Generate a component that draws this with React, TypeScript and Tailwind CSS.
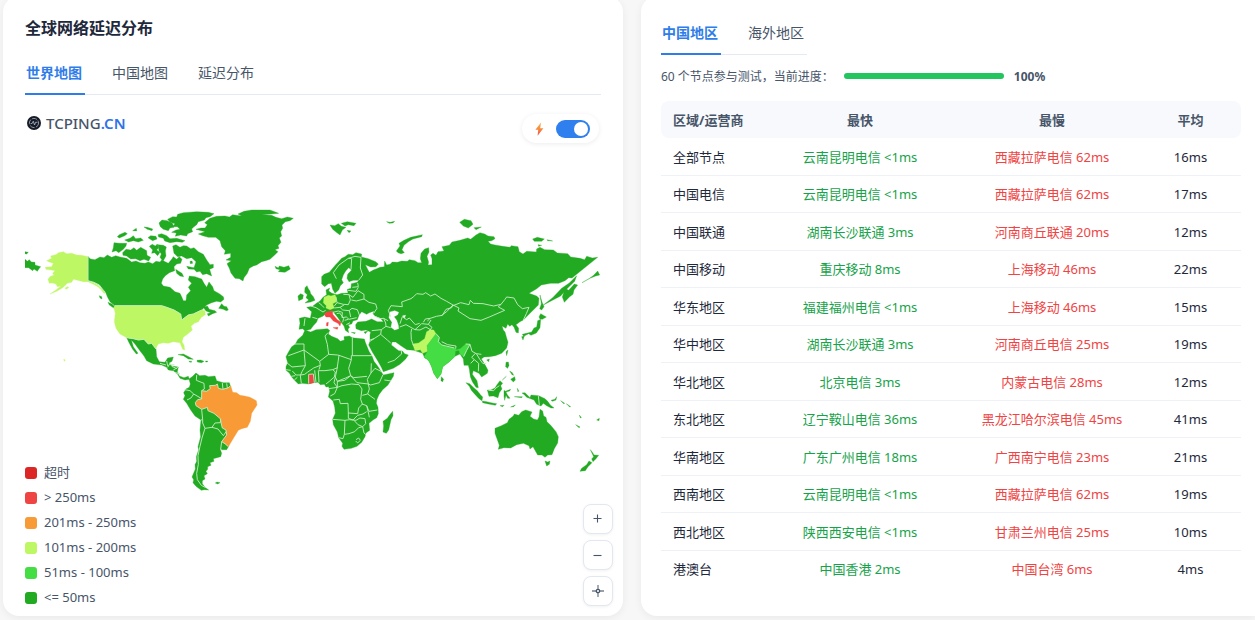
import { useState } from "react";

const GREEN = "#22aa22";
const LIME = "#bef764";
const LIGHT = "#44dd44";
const ORANGE = "#f89a36";
const RED = "#f54242";

type Area = { fill: string; points: string };
type Region = { x: number; y: number; areas: Area[]; borders?: string };

const land = (...shapes: string[]): Area[] => shapes.map((points) => ({ fill: GREEN, points }));

const regions: Region[] = [
  {
    // North and Central America
    x: 20,
    y: 200,
    areas: [
      ...land(
        "15,178 22,184 28,179 34,186 45,187 45,195 62,200 57,206 52,214 42,207 38,212 26,203 15,203",
        "15,155 25,157 20,162 15,161",
        "204,170 212,177 225,179 240,171 252,173 262,165 275,172 287,167 300,171 320,175 335,186 348,183 360,188 375,190 385,186 398,191 408,184 420,186 425,180 445,190 455,178 460,170 470,178 478,170 486,178 482,190 470,192 462,200 464,212 448,218 436,227 428,237 424,250 430,258 450,262 465,275 480,280 485,290 490,302 498,302 500,285 512,272 505,262 515,250 505,240 508,228 525,230 545,237 552,250 560,262 567,246 578,260 582,272 598,281 610,290 612,298 602,306 590,304 575,308 560,315 545,330 520,342 505,345 485,360 482,342 462,330 440,322 425,317 285,317 270,305 262,290 258,280 248,268 238,255 222,247 204,242",
        "550,322 562,318 568,328 585,332 590,337 578,341 565,348 562,341 572,338 558,333",
        "596,325 605,311 612,319 620,320 625,330 619,332 610,328",
        "238,287 245,290 246,297 240,294",
        "264,307 276,312 288,323 292,329 280,323 268,315",
        "458,138 468,134 480,142 490,137 500,138 512,146 522,143 535,155 550,163 560,180 570,194 580,193 580,203 569,208 575,228 560,221 548,224 540,214 530,216 522,208 505,207 500,199 522,203 528,185 515,173 500,176 485,168 473,170 462,160",
        "467,208 475,213 486,220 491,230 480,228 470,220",
        "510,184 516,183 518,190 511,191",
        "282,128 298,130 320,130 318,138 310,148 296,158 288,152 276,156 280,143",
        "308,158 318,148 332,150 342,143 350,151 362,142 380,152 381,166 392,172 386,183 372,178 360,182 347,176 332,177 320,168 309,166",
        "292,110 298,104 315,97 322,101 314,107 298,114",
        "314,120 330,115 340,107 347,116 362,114 370,121 355,126 340,122 326,126",
        "338,92 349,85 350,93",
        "372,81 382,82 398,87 396,92 382,88",
        "384,113 392,107 408,109 411,117 398,122",
        "388,139 397,133 406,138 412,132 416,143 410,150 420,157 413,167 404,158 395,160 398,150",
        "414,134 430,136 439,141 436,153 438,168 429,184 420,172 424,162 417,153",
        "414,104 425,101 440,107 450,116 470,115 495,122 487,127 470,125 450,128 434,123 430,115 416,111",
        "443,58 458,50 470,51 473,43 490,38 530,35 565,37 582,41 570,50 558,53 553,60 535,65 530,74 522,80 515,87 518,95 503,101 500,108 482,105 466,109 469,99 455,97 468,90 480,88 472,80 457,80 465,71 450,67",
        "417,69 426,60 442,62 457,70 462,82 450,84 445,92 430,88 421,80",
        "320,413 340,416 355,420 372,418 385,432 395,430 408,447 410,470 418,485 435,487 443,474 460,471 456,484 447,489 455,498 475,501 472,515 478,528 492,533 505,529 508,538 495,540 480,535 473,523 460,512 445,510 440,502 425,495 400,492 380,482 372,468 358,450 345,432 334,420 340,440 354,460 349,462 338,448 328,430",
        "474,464 490,462 506,470 520,478 505,477 490,467",
        "531,481 542,480 552,484 545,488 532,486",
        "507,484 515,484 514,487 508,486",
        "557,483 563,483 562,486 557,486",
      ),
      { fill: LIME, points: "80,182 95,175 92,168 108,164 115,158 130,155 140,161 155,160 170,165 184,166 204,170 204,242 221,249 236,257 246,269 255,277 253,281 242,268 234,260 220,253 204,245 190,245 170,240 160,238 155,247 142,250 128,263 110,274 90,282 108,270 123,258 112,260 108,252 98,249 88,250 84,238 90,230 102,225 98,220 105,212 95,210 78,208 76,202 95,200 100,190 88,186" },
      { fill: LIME, points: "135,264 144,260 146,263 138,268" },
      { fill: LIME, points: "285,317 425,317 440,322 462,330 482,342 485,360 505,345 520,342 545,330 555,332 556,344 544,352 535,365 523,370 513,379 517,390 503,402 490,412 486,425 492,435 494,450 488,448 480,428 460,425 445,430 430,428 415,432 410,440 408,447 395,430 385,432 372,418 355,420 340,416 320,413 300,402 288,385 283,365 286,340 281,322" },
      { fill: LIME, points: "131,478 136,480 133,484" },
    ],
    borders: "M204 170V242L222 247L238 255L248 268L256 277M285 317H425L440 322L462 330L482 342L485 360L505 345L520 342L545 330M320 413L340 416L355 420L372 418L385 432L395 430L408 447M443 502L450 490M460 510L474 502M472 521H480",
  },
  {
    // Greenland and Iceland
    x: 170,
    y: 200,
    areas: land(
      "78,88 93,84 105,84 112,74 104,68 120,55 140,49 165,48 178,51 188,44 215,48 204,42 222,34 245,30 300,30 326,40 305,42 275,44 305,46 318,52 335,56 352,51 370,55 360,62 346,65 336,75 338,85 332,95 335,108 328,114 333,127 324,137 327,145 315,149 324,155 314,165 300,178 287,182 275,185 260,195 250,198 238,205 232,220 222,233 219,243 208,236 195,235 183,219 178,205 171,191 184,182 168,180 182,172 182,160 163,163 166,152 155,140 150,122 137,112 115,112 98,107 85,102 105,95",
      "315,199 325,204 328,198 342,202 356,197 361,207 345,217 325,215 330,209 318,206",
    ),
  },
  {
    // Europe and Asia
    x: 280,
    y: 210,
    areas: [
      ...land(
        "125,200 132,193 148,187 158,175 167,164 175,156 185,145 195,140 205,133 218,134 228,128 245,132 244,141 265,146 287,155 295,162 288,170 272,171 256,164 263,178 268,187 280,180 290,176 300,172 313,170 314,153 320,165 330,163 337,156 352,157 365,153 382,154 388,149 405,152 414,158 425,158 421,146 423,130 434,117 446,113 447,126 441,139 446,157 444,165 456,164 456,146 452,135 459,130 468,136 474,125 492,123 486,110 508,106 516,96 540,91 563,84 572,88 588,75 600,68 614,72 624,78 642,80 645,86 635,92 624,94 632,102 645,105 668,109 690,112 694,107 714,110 718,125 729,132 740,124 769,126 770,117 780,112 794,119 820,120 832,129 863,131 872,141 900,145 914,149 920,139 937,144 953,142 876,204 866,203 855,212 836,220 812,220 784,225 769,237 747,250 770,258 777,265 775,285 750,310 730,330 720,335 708,344 716,355 715,369 708,367 702,352 696,344 689,349 683,342 678,355 666,348 670,360 675,366 680,384 684,397 680,414 665,430 646,437 628,440 612,441 604,447 616,466 624,481 622,490 605,501 597,490 580,482 577,493 591,512 595,533 588,532 577,515 571,500 568,478 565,466 552,466 550,447 540,432 525,439 508,455 488,470 483,492 472,506 461,489 455,470 448,455 442,448 434,444 428,430 401,421 381,419 365,409 347,396 336,396 334,405 356,422 367,423 374,431 385,435 377,447 360,463 340,475 310,485 304,472 293,452 277,426 266,405 270,394 270,375 272,366 258,360 244,362 228,356 227,344 233,336 258,334 275,327 292,335 310,335 301,324 285,318 279,311 283,303 268,308 260,313 245,305 237,316 232,329 219,333 215,342 204,344 209,352 204,357 206,368 196,361 192,348 183,337 174,323 165,312 158,303 137,309 130,318 114,325 110,336 101,346 92,358 75,362 68,356 57,358 60,340 58,325 74,321 91,325 95,305 80,292 98,289 109,280 120,273 129,262 140,254 138,240 149,234 146,243 156,250 171,254 185,250 204,249 202,238 213,235 214,221 232,217 236,211 220,211 207,215 201,205 203,193 215,180 206,173 197,183 190,195 185,209 190,218 181,227 176,240 165,250 158,238 154,220 145,221 134,230 125,222",
        "75,233 81,227 85,236 90,243 92,251 100,260 105,271 92,276 75,279 86,270 78,263 82,254 74,247",
        "54,258 62,251 70,255 68,267 56,272",
        "150,45 164,47 175,41 184,49 198,52 187,60 180,75 169,67 158,58",
        "184,40 202,35 228,40 222,47 205,44 195,48",
        "201,61 213,63 207,68",
        "320,35 331,37 344,34 339,39 328,40",
        "349,123 360,108 357,100 372,91 392,82 427,74 425,80 399,87 385,95 372,106 366,119 373,128 363,131 354,128",
        "539,37 553,28 573,32 579,43 565,54 550,48",
        "582,53 604,51 588,59",
        "758,87 772,82 793,87 785,94 763,94",
        "801,89 818,93 803,92",
        "774,104 785,106 776,109",
        "790,285 818,263 845,235 868,219 890,197 884,214 861,236 842,258",
        "855,235 866,241 883,222 893,225 882,240 879,253 869,260 853,277 847,261",
        "906,218 927,206 941,196 953,183 959,195 947,198 930,205 910,216",
        "780,255 786,276 792,290 785,300 779,296 784,282",
        "777,321 782,311 799,321 787,328 780,327",
        "773,332 782,328 780,353 769,369 753,376 746,371 731,379 727,373 755,366 762,354 770,351",
        "725,380 733,378 729,390",
        "678,425 684,420 680,437",
        "214,367 226,368 224,371",
        "252,366 263,363 256,371",
      ),
      { fill: LIME, points: "132,262 145,256 153,258 165,254 169,263 168,276 158,281 163,294 150,299 138,294 139,287 130,278" },
      { fill: RED, points: "132,312 143,305 158,303 158,313 172,329 183,337 180,348 174,340 160,333 150,321 138,321" },
      { fill: RED, points: "159,353 174,352 172,358" },
      { fill: RED, points: "140,338 145,337 144,348 139,347" },
      { fill: "#fff", points: "330,306 344,302 356,307 353,314 342,320 350,331 355,346 356,356 344,360 333,352 336,337 327,323" },
      { fill: "#fff", points: "368,317 377,316 373,325" },
      { fill: LIME, points: "398,402 416,399 434,386 440,365 451,359 461,360 468,371 454,390 441,407 443,424 428,430 421,419 405,422" },
      { fill: LIGHT, points: "468,371 478,382 475,395 485,405 501,410 523,414 529,419 541,416 557,402 570,403 560,421 551,440 540,432 537,421 526,423 525,439 508,455 488,470 483,492 472,506 461,489 455,470 448,455 442,448 432,441 443,424 441,407 454,390" },
    ],
    borders: "M169 206L160 188L177 165L205 145L215 146L213 178M205 145L225 139L243 142L241 174L248 195L236 211M217 232L235 230L233 219M204 241L228 244L235 232M168 262L171 278L190 283L205 284L211 270L207 254L190 253M207 254L219 262L234 242L252 253L252 267L229 273L214 270M252 267L267 277L287 282L291 295L281 310M163 294L180 292L188 300L207 302L216 295L232 299L238 315M171 278L163 288M180 292L192 285M97 322L112 326M92 288L108 293L129 306L137 301M116 278L126 286L132 293M159 307L175 303L187 307L186 323L199 321L207 328L230 323M170 311L179 309L191 325L188 337M194 331L205 328M199 344L210 338M208 302L212 321M75 325L72 348M283 318L300 326L311 325L324 332M311 325L317 339L318 349L304 359L275 362M318 349L332 353M304 359L302 373L282 386L270 390M302 373L323 391L332 399M282 386L270 394M332 320L325 301L333 287L367 290L365 276L393 266L401 260L410 251L429 253L437 248L452 258L465 252L483 265L500 274L519 285L515 293L498 298L487 316L469 319L451 325L442 333M360 341L367 320L380 329L388 324L406 344L419 340M359 351L378 344L405 359L425 341L445 343L453 330M395 357L393 367L394 389L401 408M405 359L420 360L438 351L451 359M445 343L456 352L448 363M451 325L436 327L430 337M519 285L537 294L534 303L570 326L603 331L628 321L674 301L655 291L663 283L641 288L609 281L580 280L571 271L567 284L542 278L519 287M663 283L675 268L680 261L702 264L713 284L727 296L747 292L739 311L730 330M519 285L500 305L484 317M468 371L478 382L475 395L485 405L523 414M557 402L570 403L560 421L551 440M570 403L576 424L589 431L604 433M586 430L575 442L583 449L596 460L595 484M589 431L600 449L609 461L619 460M572 460L583 449M323 458L343 451L365 432L364 423M485 395L503 404L528 408L527 416",
  },
  {
    // Africa
    x: 270,
    y: 320,
    areas: [
      ...land(
        "105,30 122,36 138,29 172,26 179,31 175,42 185,49 203,56 211,64 223,60 222,50 238,48 247,53 262,55 283,57 286,67 297,94 306,108 312,124 325,141 334,156 340,165 372,158 370,169 354,195 338,209 327,224 321,238 319,250 324,262 325,281 320,293 309,300 297,310 299,331 288,339 285,350 275,367 261,379 244,385 222,388 216,379 218,370 206,353 202,336 190,314 188,298 196,280 194,261 189,243 175,231 179,214 176,200 168,201 163,193 151,194 144,187 132,188 115,192 97,190 85,192 73,180 65,171 58,159 48,151 48,140 53,128 48,110 56,95 65,80 76,73 83,59 98,46",
        "368,274 369,287 363,299 356,330 349,340 339,336 341,318 339,304 352,295 358,286",
        "514,170 521,178 517,186 513,181",
      ),
      { fill: RED, points: "116,163 130,162 131,188 116,191" },
    ],
    borders: "M75 72H102V90L55 107M102 90L106 137L66 141L50 128M102 90L149 124L176 103L172 73L165 48L174 38M176 103L203 105L207 106L244 119V107H306M247 53V107M244 119L236 145L242 167L227 174L202 184L196 171L201 148L207 106M149 124L151 136L131 144L112 157L104 163L93 165L78 165L67 153M106 137L96 155L91 167L94 190M145 152L147 187M134 151L138 187M116 163V191M116 163L130 162L133 188M145 152L165 152L188 149L196 156L193 171L178 184L168 192M151 136L147 149M188 149L203 143M196 171L192 188L202 202L176 206M202 184L202 202L194 221L181 228M202 184L224 181L242 167L261 188L295 192L292 178L303 159L304 130M242 167L251 173L291 169M303 159L315 145L333 154M339 164L328 188L302 195L295 192L298 207L293 222L315 238M343 180L364 183M202 202L216 197L245 192L267 194L276 207L272 238L277 252L266 264L263 281L235 279L234 250L211 251L208 238L190 240M277 226L293 222M276 252L290 257L297 274L322 270M290 257L296 282L298 292M235 279V295L249 300L263 286L279 282L290 275M188 298L225 301L239 299L258 301L270 294L285 296L287 311L278 320L264 314L252 301M225 301L223 343L219 356L206 353M223 343L237 341L254 335L266 323L278 320L282 339L288 344M258 359L266 354L271 361L263 369L257 363M48 149L62 151M64 169L76 167M73 180L82 172",
  },
  {
    // South-East Asia and Oceania
    x: 430,
    y: 320,
    areas: land(
      "195,325 214,317 232,308 237,298 250,288 253,282 266,286 275,275 287,270 306,276 300,289 311,297 322,300 327,291 330,268 338,273 341,288 348,292 351,305 362,316 378,335 385,350 383,369 373,386 366,404 353,405 345,412 336,405 323,405 315,391 309,380 300,387 297,377 280,370 260,374 242,384 222,383 205,388 208,376 202,359 195,340",
      "345,423 353,426 360,423 358,433 350,438",
      "481,389 488,398 492,405 506,406 498,416 489,425 485,417 491,410",
      "477,423 486,428 474,440 466,452 450,454 455,445 470,434",
      "108,188 119,191 132,204 142,212 152,225 158,231 156,242 147,236 133,221 124,211 118,199",
      "157,243 170,245 183,248 200,251 196,256 175,252 158,248",
      "172,210 183,210 195,204 201,194 210,182 218,190 212,197 216,207 208,218 204,233 190,228 177,229",
      "222,211 226,214 242,208 239,213 228,216 232,224 240,235 233,235 228,226 224,241 222,229",
      "276,219 285,218 292,225 300,233 303,225 326,227 345,236 353,244 361,255 372,264 363,264 350,257 340,250 333,258 320,253 312,240 290,232 283,224",
      "228,127 235,126 237,136 233,145 227,140",
      "239,153 247,158 251,166 246,164",
      "242,178 254,170 256,180 250,186",
      "170,120 178,117 176,125",
      "210,257 222,256 218,260",
      "242,261 256,255 251,260",
      "262,205 266,212 264,216",
      "253,230 277,230 275,233",
      "437,314 450,321 447,323",
      "500,300 508,295 507,302",
      "363,241 375,238 380,230 378,240 368,244",
      "392,242 404,250 401,251",
      "409,251 422,260 419,261",
      "448,285 454,293 451,294",
      "227,171 217,180 229,169",
    ),
    borders: "M175 211L191 212L198 204L208 197M325 227L328 256",
  },
  {
    // South America
    x: 160,
    y: 350,
    areas: [
      ...land(
        "87,87 98,79 108,69 119,77 135,76 146,80 165,78 170,92 190,98 208,98 212,110 214,150 220,230 205,290 200,299 187,299 180,296 185,310 182,320 160,326 162,334 150,338 153,346 143,350 143,358 138,364 142,371 132,377 135,387 127,392 127,401 135,412 146,420 133,419 124,421 108,409 99,398 101,389 96,381 101,369 106,357 105,344 110,334 109,320 116,299 114,290 122,260 120,241 123,210 105,198 92,180 80,160 70,148 75,137 71,128 78,117 88,112 91,102",
        "166,399 171,396 180,398 173,402",
      ),
      { fill: ORANGE, points: "125,122 140,124 151,116 149,107 166,106 172,102 175,115 187,118 204,114 212,107 218,127 230,128 240,136 254,138 270,142 289,152 291,165 275,190 271,214 262,232 245,236 235,241 222,262 205,290 195,281 185,275 200,255 198,240 187,234 184,222 181,206 162,190 144,182 142,172 125,178 108,167 106,158 113,149 125,147" },
    ],
    borders: "M110 75L109 91L132 100L133 117L125 122L125 147M74 119L90 122L101 132L93 144L81 150M101 132L125 146M125 147L113 149L106 158L108 167L125 178L142 172L144 182M125 178L128 209L123 210M144 182L162 190L181 206L184 222L187 234L198 240L200 255L185 275L195 281L205 290M128 209L128 219L135 235L156 232L165 219L181 218L182 206M156 232L174 237L190 257L199 244M135 235L126 264L120 289L114 317L115 343L110 370L112 389L124 406M185 275L182 298M125 122L140 124L151 116L149 107L166 106L172 102L175 115L187 118L204 114L212 107M187 99L189 118M200 100L202 114M0 40L18 45M20 33L23 48M35 49L51 56M45 68L58 70M28 44L43 44M124 406L137 413",
  },
];

function WorldMap({ zoom }: { zoom: number }) {
  const w = 576 / zoom;
  const h = 457 / zoom;
  return (
    <svg viewBox={`${313 - w / 2} ${371.5 - h / 2} ${w} ${h}`} className="block h-auto w-full" role="img" aria-label="世界地图">
      {regions.map((r, i) => (
        <g key={i} transform={`translate(${r.x} ${r.y}) scale(0.33333)`} strokeLinejoin="round">
          {r.areas.map((a, j) => (
            <polygon key={j} points={a.points} fill={a.fill} stroke={a.fill} strokeWidth="1" />
          ))}
          {r.borders && <path d={r.borders} fill="none" stroke="#c4ecc0" strokeWidth="2.8" />}
        </g>
      ))}
    </svg>
  );
}

function Tabs({ items }: { items: string[] }) {
  const [active, setActive] = useState(0);
  return (
    <div role="tablist" className="flex gap-[26px] border-b border-[#e5eaf2]">
      {items.map((t, i) => (
        <button
          key={t}
          type="button"
          role="tab"
          aria-selected={i === active}
          onClick={() => setActive(i)}
          className={
            i === active
              ? "-mb-px border-b-2 border-[#2f7de9] pt-[10px] pr-[3px] pb-[10px] pl-px text-sm font-bold text-[#2f7de9]"
              : "-mb-px border-b-2 border-transparent pt-[10px] pr-[3px] pb-[10px] pl-px text-sm text-[#475569]"
          }
        >
          {t}
        </button>
      ))}
    </div>
  );
}

const legend = [
  { label: "超时", swatch: "bg-[#dc2626]" },
  { label: "> 250ms", swatch: "bg-[#ef4444]" },
  { label: "201ms - 250ms", swatch: "bg-[#f89a36]" },
  { label: "101ms - 200ms", swatch: "bg-[#bef764]" },
  { label: "51ms - 100ms", swatch: "bg-[#44dd44]" },
  { label: "<= 50ms", swatch: "bg-[#22aa22]" },
];

const rows = [
  ["全部节点", "云南昆明电信 <1ms", "西藏拉萨电信 62ms", "16ms"],
  ["中国电信", "云南昆明电信 <1ms", "西藏拉萨电信 62ms", "17ms"],
  ["中国联通", "湖南长沙联通 3ms", "河南商丘联通 20ms", "12ms"],
  ["中国移动", "重庆移动 8ms", "上海移动 46ms", "22ms"],
  ["华东地区", "福建福州电信 <1ms", "上海移动 46ms", "15ms"],
  ["华中地区", "湖南长沙联通 3ms", "河南商丘电信 25ms", "19ms"],
  ["华北地区", "北京电信 3ms", "内蒙古电信 28ms", "12ms"],
  ["东北地区", "辽宁鞍山电信 36ms", "黑龙江哈尔滨电信 45ms", "41ms"],
  ["华南地区", "广东广州电信 18ms", "广西南宁电信 23ms", "21ms"],
  ["西南地区", "云南昆明电信 <1ms", "西藏拉萨电信 62ms", "19ms"],
  ["西北地区", "陕西西安电信 <1ms", "甘肃兰州电信 25ms", "10ms"],
  ["港澳台", "中国香港 2ms", "中国台湾 6ms", "4ms"],
];

const zoomButton =
  "flex h-[30px] w-[30px] items-center justify-center rounded-lg border border-[#e2e8f0] bg-white text-[#475569] shadow-[0_1px_3px_rgba(0,0,0,0.06)]";

export default function App() {
  const [zoom, setZoom] = useState(1);
  return (
    <div className="overflow-hidden bg-[#f7f7f7] pb-1 font-['Noto_Sans','Noto_Sans_CJK_SC',sans-serif]">
      <main className="-mt-1 grid grid-cols-[620fr_614fr] gap-[18px] pl-[3px]">
        <section className="relative rounded-2xl bg-white px-[22px] pt-5 pb-4 shadow-[0_2px_8px_rgba(0,0,0,0.06)]">
          <h2 className="mb-[13px] text-base font-bold text-[#1e293b]">全球网络延迟分布</h2>
          <Tabs items={["世界地图", "中国地图", "延迟分布"]} />
          <div className="mt-[19px] flex items-start justify-between px-[2px]">
            <div className="flex h-[18px] items-center gap-[5px]">
              <svg viewBox="0 0 14 14" className="h-[14px] w-[14px]" fill="none" aria-hidden="true">
                <circle cx="7" cy="7" r="7" fill="#161b27" />
                <circle cx="7" cy="7" r="4.6" stroke="#9aa3b2" strokeWidth="0.9" strokeDasharray="5 1.4" />
                <path d="M3.6 7.6 5.2 7.4 6.3 5.2 7.5 9 8.7 6.2 10.4 6.4" stroke="#b7bfcb" strokeWidth="0.8" />
              </svg>
              <span className="text-[15px] leading-5 font-medium text-[#475569]">
                TCPING<b className="font-semibold text-[#2f73e8]">.CN</b>
              </span>
            </div>
            <label className="flex h-[29px] items-center gap-[11px] rounded-full bg-white pr-[9px] pl-[11px] shadow-[0_1px_5px_rgba(0,0,0,0.08)]">
              <svg viewBox="0 0 12 16" className="h-4 w-3" aria-hidden="true">
                <defs>
                  <linearGradient id="bolt" x1="0" y1="0" x2="0" y2="1">
                    <stop offset="0" stopColor="#f6b24b" />
                    <stop offset="0.5" stopColor="#f58a3c" />
                    <stop offset="1" stopColor="#ef4a55" />
                  </linearGradient>
                </defs>
                <path d="M8 1.6 2.4 8.8H5.2L4.6 14.8 10.4 7.2H7.2Z" fill="url(#bolt)" />
              </svg>
              <input type="checkbox" role="switch" defaultChecked aria-label="极速模式" className="peer sr-only" />
              <span className="flex h-[18px] w-[34px] items-center rounded-full bg-[#cbd5e1] px-[2px] peer-checked:justify-end peer-checked:bg-[#2f7fee]">
                <span className="h-[14px] w-[14px] rounded-full bg-white" />
              </span>
            </label>
          </div>
          <WorldMap zoom={zoom} />
          <ul className="absolute bottom-[6px] left-[22px] text-[13px] text-[#475569]">
            {legend.map((l) => (
              <li key={l.label} className="flex h-[25px] items-center gap-[7px]">
                <span className={`h-3 w-3 rounded-[3px] ${l.swatch}`} />
                {l.label}
              </li>
            ))}
          </ul>
          <div className="absolute right-[10px] bottom-[10px] flex flex-col gap-[6px]">
            <button type="button" aria-label="放大" className={zoomButton} onClick={() => setZoom(zoom * 1.25)}>
              <svg viewBox="0 0 10 10" className="h-[10px] w-[10px]" stroke="currentColor" strokeWidth="1.1">
                <path d="M4.5 0.5v8M0.5 4.5h8" />
              </svg>
            </button>
            <button type="button" aria-label="缩小" className={zoomButton} onClick={() => setZoom(Math.max(1, zoom / 1.25))}>
              <svg viewBox="0 0 10 10" className="h-[10px] w-[10px]" stroke="currentColor" strokeWidth="1.1">
                <path d="M0.5 5.5h8" />
              </svg>
            </button>
            <button type="button" aria-label="重置" className={zoomButton} onClick={() => setZoom(1)}>
              <svg viewBox="0 0 12 12" className="h-3 w-3" fill="none" stroke="currentColor">
                <circle cx="6" cy="6" r="1.7" strokeWidth="1.3" />
                <path d="M6 0v4M6 8v4M0 6h4M8 6h4" strokeWidth="1.3" opacity="0.75" />
              </svg>
            </button>
          </div>
        </section>

        <section className="rounded-l-2xl bg-white pt-[17px] pr-[14px] pb-4 pl-5 shadow-[0_2px_8px_rgba(0,0,0,0.06)]">
          <div className="flex">
            <Tabs items={["中国地区", "海外地区"]} />
          </div>
          <div className="mt-[11px] flex h-5 items-center gap-[10px] text-xs text-[#475569]">
            <span className="pt-[2px]">60 个节点参与测试，当前进度：</span>
            <div role="progressbar" aria-valuenow={100} aria-label="当前进度" className="h-[6px] w-40 rounded-full bg-[#22c55e]" />
            <b className="pt-[2px] font-bold">100%</b>
          </div>
          <table className="mt-[15px] w-full table-fixed border-separate border-spacing-0 text-[13px] text-[#1e293b]">
            <thead className="text-[#475569]">
              <tr className="h-[37px] [&>th]:bg-[#f7f9fc] [&>th]:pt-[2px] [&>th]:font-bold">
                <th scope="col" className="w-[95px] rounded-l-lg pl-3 text-left whitespace-nowrap">区域/运营商</th>
                <th scope="col">最快</th>
                <th scope="col" className="w-[176px]">最慢</th>
                <th scope="col" className="w-[101px] rounded-r-lg">平均</th>
              </tr>
            </thead>
            <tbody className="[&_td]:border-b [&_td]:border-[#eef2f7] [&_td]:pt-[2px] [&>tr:last-child>td]:border-transparent">
              {rows.map((r) => (
                <tr key={r[0]} className="odd:h-[38px] even:h-[37px]">
                  <td className="pl-3">{r[0]}</td>
                  <td className="text-center text-[#16a34a]">{r[1]}</td>
                  <td className="text-center text-[#ef4444]">{r[2]}</td>
                  <td className="text-center">{r[3]}</td>
                </tr>
              ))}
            </tbody>
          </table>
        </section>
      </main>
    </div>
  );
}
